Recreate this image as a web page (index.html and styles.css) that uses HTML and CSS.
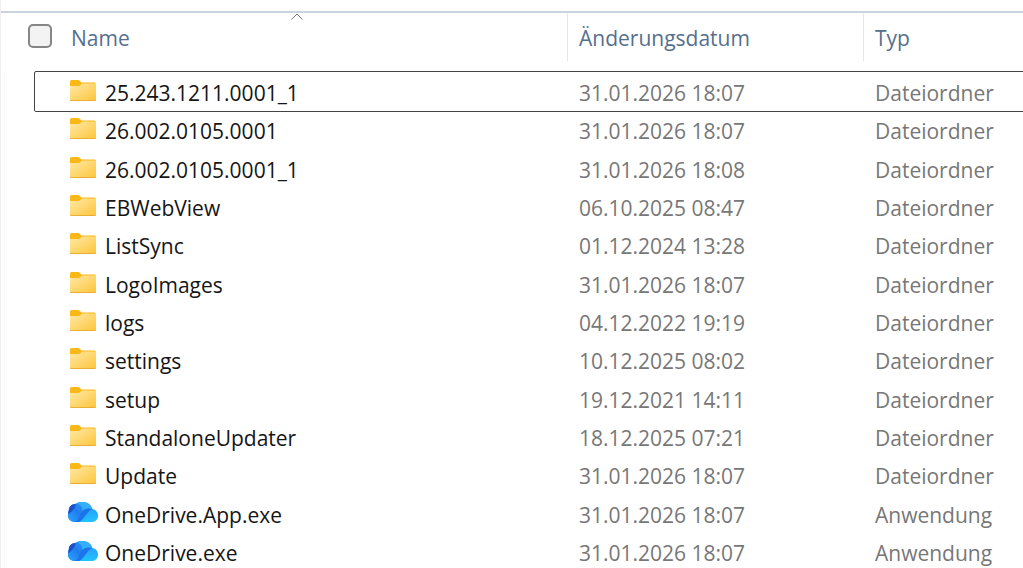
FILE: index.html
```
<!DOCTYPE html>
<html lang="de">
<head>
<meta charset="utf-8">
<title>OneDrive</title>
<link rel="stylesheet" href="styles.css">
</head>
<body>
<svg class="defs" aria-hidden="true">
  <defs>
    <linearGradient id="paper" x1="0" y1="0" x2="1" y2="1">
      <stop offset="0" stop-color="#ffe9a6"/><stop offset="1" stop-color="#fdc63c"/>
    </linearGradient>
    <linearGradient id="sky" x1="0" y1="0" x2="0" y2="1">
      <stop offset="0" stop-color="#35b4fc"/><stop offset="0.5" stop-color="#25a8fb"/><stop offset="1" stop-color="#20c4ff"/>
    </linearGradient>
    <linearGradient id="deep" x1="0" y1="1" x2="1" y2="0">
      <stop offset="0" stop-color="#2fa4fa"/><stop offset="0.5" stop-color="#1f7df0"/><stop offset="1" stop-color="#2f9cf8"/>
    </linearGradient>
    <clipPath id="cloud-shape">
      <path d="M7 20C3 20 0 17.400 0 13.500C0 10.500 1 8.500 1 7C1.500 4 4 2.300 7 2.300C9 .8 12 0 15 0C19.500 0 23 2.500 24.500 7C27.500 7.500 30 10 30 13.500C30 17.500 27.500 20 23.500 20Z"/>
    </clipPath>
    <symbol id="folder" viewBox="0 0 26 21">
      <path d="M0 1.500Q0 0 1.500 0H8Q9 0 9.700 .8L11.500 2.500H24.500Q26 2.500 26 4V8H0Z" fill="#fab818"/>
      <path d="M0 6H8.500Q9.500 6 10.300 5.300L12 3.500H26V19.500Q26 20.500 25 20.500H1Q0 20.500 0 19.500Z" fill="url(#paper)"/>
      <path d="M0 19.500Q0 20.500 1 20.500H25Q26 20.500 26 19.500" fill="none" stroke="#e9ae35"/>
    </symbol>
    <symbol id="cloud" viewBox="0 0 30 20">
      <g clip-path="url(#cloud-shape)">
        <path d="M0 0H30V20H0Z" fill="url(#sky)"/>
        <path d="M0 0H14C20 1 20 6 17 9C14 12 12 20 7 20H0Z" fill="url(#deep)"/>
        <path d="M0 0H8C8 4 6 8 2.500 10.500L0 12.500Z" fill="#1b50c8"/>
        <path d="M6.500 20C12 18 10.500 12 15 8.500C18 6.300 21 5.500 24.500 7C19 9 16 18 11 20Z" fill="#1c74ea"/>
        <path d="M9 0H17C21 1 23 3 24.500 7C20 5 16 7 14 9C15 5 13 3 9 1.500Z" fill="#35aefc"/>
      </g>
    </symbol>
  </defs>
</svg>
<main class="explorer">
  <table class="files">
    <thead>
      <tr class="head">
        <th class="pick"><input class="check" type="checkbox" aria-label="Alle auswählen"></th>
        <th class="label sorted" aria-sort="ascending">Name
          <svg class="caret" viewBox="0 0 12 7" aria-hidden="true"><path d="M.5 6.500L6 1L11.500 6.500"/></svg>
        </th>
        <th class="label divided">Änderungsdatum</th>
        <th class="label divided">Typ</th>
      </tr>
    </thead>
    <tbody>
      <tr class="row focused"><td class="name"><svg class="icon"><use href="#folder"/></svg>25.243.1211.0001_1</td><td class="meta">31.01.2026 18:07</td><td class="meta">Dateiordner</td></tr>
      <tr class="row"><td class="name"><svg class="icon"><use href="#folder"/></svg>26.002.0105.0001</td><td class="meta">31.01.2026 18:07</td><td class="meta">Dateiordner</td></tr>
      <tr class="row"><td class="name"><svg class="icon"><use href="#folder"/></svg>26.002.0105.0001_1</td><td class="meta">31.01.2026 18:08</td><td class="meta">Dateiordner</td></tr>
      <tr class="row"><td class="name"><svg class="icon"><use href="#folder"/></svg>EBWebView</td><td class="meta">06.10.2025 08:47</td><td class="meta">Dateiordner</td></tr>
      <tr class="row"><td class="name"><svg class="icon"><use href="#folder"/></svg>ListSync</td><td class="meta">01.12.2024 13:28</td><td class="meta">Dateiordner</td></tr>
      <tr class="row"><td class="name"><svg class="icon"><use href="#folder"/></svg>LogoImages</td><td class="meta">31.01.2026 18:07</td><td class="meta">Dateiordner</td></tr>
      <tr class="row"><td class="name"><svg class="icon"><use href="#folder"/></svg>logs</td><td class="meta">04.12.2022 19:19</td><td class="meta">Dateiordner</td></tr>
      <tr class="row"><td class="name"><svg class="icon"><use href="#folder"/></svg>settings</td><td class="meta">10.12.2025 08:02</td><td class="meta">Dateiordner</td></tr>
      <tr class="row"><td class="name"><svg class="icon"><use href="#folder"/></svg>setup</td><td class="meta">19.12.2021 14:11</td><td class="meta">Dateiordner</td></tr>
      <tr class="row"><td class="name"><svg class="icon"><use href="#folder"/></svg>StandaloneUpdater</td><td class="meta">18.12.2025 07:21</td><td class="meta">Dateiordner</td></tr>
      <tr class="row"><td class="name"><svg class="icon"><use href="#folder"/></svg>Update</td><td class="meta">31.01.2026 18:07</td><td class="meta">Dateiordner</td></tr>
      <tr class="row"><td class="name"><svg class="icon app"><use href="#cloud"/></svg>OneDrive.App.exe</td><td class="meta">31.01.2026 18:07</td><td class="meta">Anwendung</td></tr>
      <tr class="row"><td class="name"><svg class="icon app"><use href="#cloud"/></svg>OneDrive.exe</td><td class="meta">31.01.2026 18:07</td><td class="meta">Anwendung</td></tr>
    </tbody>
  </table>
</main>
</body>
</html>
```
FILE: styles.css
```
* { box-sizing: border-box; }

body {
  margin: 0;
  background: #fff;
  font: 21px/28px "Segoe UI", "Open Sans", sans-serif;
  color: #151515;
}

.defs { position: absolute; width: 0; height: 0; }

.explorer {
  min-height: 100vh;
  padding-top: 11px;
  border-left: 1px solid #f0f0f0;
  overflow: hidden;
}

.files {
  display: block;
  border-top: 2px solid #c8d5e1;
}

thead, tbody { display: block; }

tbody { border-left: 1px solid #fafafa; margin-left: 3px; }

.head, .row {
  display: grid;
  white-space: nowrap;
}

.head {
  grid-template-columns: 42px 1fr 296px 160px;
  height: 48px;
  padding-left: 24px;
  margin-bottom: 10px;
}

th, td { padding: 0; text-align: left; font-weight: 400; }

.pick { padding: 11px 3px; }

.check {
  display: block;
  appearance: none;
  width: 24px;
  height: 24px;
  margin: 0;
  border: 2px solid #868686;
  border-radius: 5px;
  background: #f3f3f3;
}

.check:checked { background: #0067c0; }

.label {
  padding: 11px 11px 0 4px;
  color: #566f8e;
}

.sorted { position: relative; }

.caret {
  position: absolute;
  top: 0;
  left: 50%;
  width: 12px;
  height: 7px;
  margin-left: -26px;
  fill: none;
  stroke: #777;
}

.divided {
  padding-left: 11px;
  border-left: 1px solid #e3e7eb;
}

.row {
  grid-template-columns: 1fr 296px 148px;
  align-items: center;
  height: 38px;
  margin-left: 29px;
  padding-left: 1px;
}

.row:nth-child(3n) { height: 39px; }

.focused {
  height: 41px;
  margin-right: -4px;
  padding-left: 0;
  padding-right: 3px;
  border: 1px solid #444;
  border-radius: 2px;
  padding-top: 2px;
}

.name {
  display: flex;
  align-items: center;
  padding-left: 35px;
}

.icon {
  flex: none;
  width: 26px;
  height: 21px;
  margin: 0 9px 5px 0;
}

.app {
  width: 30px;
  height: 20px;
  margin: 0 7px 5px -2px;
}

.meta { color: #777; }
```
